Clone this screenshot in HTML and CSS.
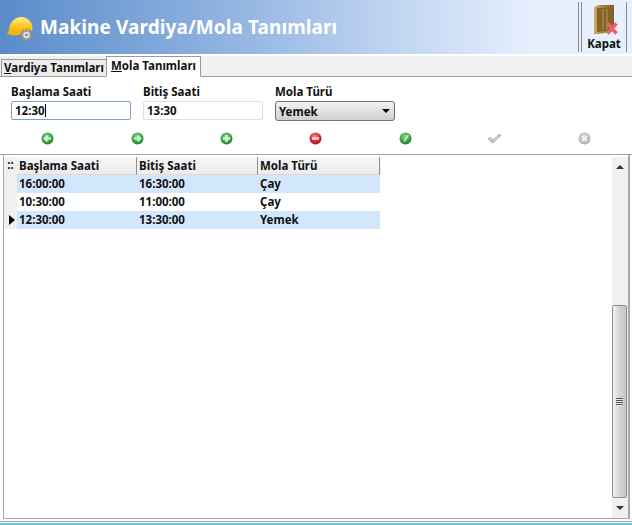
FILE: index.html
```html
<!DOCTYPE html>
<html lang="tr">
<head>
<meta charset="utf-8">
<title>Makine Vardiya/Mola Tanımları</title>
<link rel="stylesheet" href="styles.css">
</head>
<body>
<svg width="0" height="0" class="defs">
  <defs>
    <radialGradient id="gr" cx="45%" cy="35%" r="70%"><stop offset="0" stop-color="#8fd98f"/><stop offset="0.55" stop-color="#41a845"/><stop offset="1" stop-color="#167a22"/></radialGradient>
    <radialGradient id="rd" cx="45%" cy="35%" r="70%"><stop offset="0" stop-color="#f28b8b"/><stop offset="0.55" stop-color="#d8303a"/><stop offset="1" stop-color="#a01018"/></radialGradient>
    <radialGradient id="gy" cx="45%" cy="35%" r="70%"><stop offset="0" stop-color="#dcdcdc"/><stop offset="1" stop-color="#a6a6a6"/></radialGradient>
    <linearGradient id="door" x1="0" x2="1" y1="0" y2="0"><stop offset="0" stop-color="#cfae6c"/><stop offset="0.5" stop-color="#a07c3a"/><stop offset="1" stop-color="#7d5c26"/></linearGradient>
    <linearGradient id="hat" x1="0" x2="0" y1="0" y2="1"><stop offset="0" stop-color="#ffe98c"/><stop offset="0.6" stop-color="#fcc419"/><stop offset="1" stop-color="#f2ae08"/></linearGradient>
  </defs>
</svg>
<div class="app">
  <header class="banner">
    <svg class="logo" width="27" height="26" viewBox="0 0 27 26">
      <path d="M2 13 C3 6 8 1 14 1 C20 1 25 5 25.500 12 L25 15 L14 18 L2 17Z" fill="url(#hat)"/>
      <path d="M0.500 15.500 C5 13.500 10 14 15 15 L14 18.500 C9 20 3 19.500 0.500 17.500Z" fill="#f5b30c"/>
      <circle cx="19.500" cy="19" r="5" fill="#9b9ea2"/>
      <circle cx="19.500" cy="19" r="5.700" fill="none" stroke="#8a8d91" stroke-width="1.600" stroke-dasharray="2 1.600"/>
      <circle cx="19.500" cy="19" r="3.200" fill="#dfe1e3"/>
      <circle cx="19.500" cy="19" r="1.200" fill="#74787c"/>
    </svg>
    <h1 class="title">Makine Vardiya/Mola Tanımları</h1>
    <div class="close-box">
      <svg class="door-icon" width="25" height="30" viewBox="0 0 25 30">
        <path d="M1 2 L6 0 H21 V26 L6 29 H1Z" fill="url(#door)"/>
        <path d="M4 3 H19 V25 L4 27Z" fill="#85622a"/>
        <path d="M10 4 V25 M14 4 V25" stroke="#a88545" stroke-width="1.500"/>
        <path d="M14.500 18.500 L23.500 28.500 M23.500 18.500 L14.500 28.500" stroke="#e8606a" stroke-width="3.400"/>
      </svg>
      <span class="close-label">Kapat</span>
    </div>
  </header>
  <nav class="tabs">
    <div class="tab"><u>V</u>ardiya Tanımları</div>
    <div class="tab tab-active"><u>M</u>ola Tanımları</div>
  </nav>
  <section class="form">
    <div class="field">
      <label class="label">Başlama Saati</label>
      <div class="input input-focus">12:30<span class="caret"></span></div>
    </div>
    <div class="field">
      <label class="label">Bitiş Saati</label>
      <div class="input">13:30</div>
    </div>
    <div class="field">
      <label class="label">Mola Türü</label>
      <div class="select">Yemek<span class="arrow"></span></div>
    </div>
  </section>
  <section class="toolbar">
    <svg width="13" height="13" viewBox="0 0 13 13"><circle cx="6.500" cy="6.500" r="6" fill="url(#gr)"/><path d="M10 6.500H4M6.500 3.800 3.800 6.500 6.500 9.200" fill="none" stroke="#d8f2d8" stroke-width="2"/></svg>
    <svg width="13" height="13" viewBox="0 0 13 13"><circle cx="6.500" cy="6.500" r="6" fill="url(#gr)"/><path d="M3 6.500H9M6.500 3.800 9.200 6.500 6.500 9.200" fill="none" stroke="#d8f2d8" stroke-width="2"/></svg>
    <svg width="13" height="13" viewBox="0 0 13 13"><circle cx="6.500" cy="6.500" r="6" fill="url(#gr)"/><path d="M6.500 3V10M3 6.500H10" fill="none" stroke="#d8f2d8" stroke-width="2.400"/></svg>
    <svg width="13" height="13" viewBox="0 0 13 13"><circle cx="6.500" cy="6.500" r="6" fill="url(#rd)"/><path d="M3 6.500H10" fill="none" stroke="#fbe4e4" stroke-width="2.400"/></svg>
    <svg width="13" height="13" viewBox="0 0 13 13"><circle cx="6.500" cy="6.500" r="6" fill="url(#gr)"/><path d="M8.800 2.800 5.200 8.200 4.400 10 6.200 9 9.800 3.600Z" fill="#e4f4e4"/></svg>
    <svg width="15" height="11" viewBox="0 0 15 11"><path d="M0.500 6 3 3.500 5.800 6 12.500 0.500 14.500 2.500 5.800 10.500Z" fill="url(#gy)"/></svg>
    <svg width="13" height="13" viewBox="0 0 13 13"><circle cx="6.500" cy="6.500" r="6" fill="url(#gy)"/><path d="M4 4 9 9M9 4 4 9" stroke="#f2f2f2" stroke-width="2"/></svg>
  </section>
  <section class="grid-box">
    <div class="table">
      <div class="row row-head">
        <div class="cell-ind ind-head">::</div>
        <div class="cell head">Başlama Saati</div>
        <div class="cell head">Bitiş Saati</div>
        <div class="cell head">Mola Türü</div>
      </div>
      <div class="row row-blue">
        <div class="cell-ind"></div>
        <div class="cell">16:00:00</div>
        <div class="cell">16:30:00</div>
        <div class="cell">Çay</div>
      </div>
      <div class="row">
        <div class="cell-ind"></div>
        <div class="cell">10:30:00</div>
        <div class="cell">11:00:00</div>
        <div class="cell">Çay</div>
      </div>
      <div class="row row-blue">
        <div class="cell-ind"><span class="pointer"></span></div>
        <div class="cell">12:30:00</div>
        <div class="cell">13:30:00</div>
        <div class="cell">Yemek</div>
      </div>
    </div>
    <div class="scrollbar">
      <div class="sb-btn"><span class="sb-up"></span></div>
      <div class="sb-track"></div>
      <div class="sb-thumb"><span class="grip"></span></div>
      <div class="sb-btn"><span class="sb-down"></span></div>
    </div>
  </section>
  <footer class="status"></footer>
</div>
</body>
</html>
```
FILE: styles.css
```css
* { box-sizing: border-box; }
html, body { margin: 0; padding: 0; }
body { background: #fff; font-family: "Noto Sans", "DejaVu Sans", sans-serif; font-size: 11.5px; font-weight: 700; color: #111; }
.defs { position: absolute; }
.app { width: 632px; height: 525px; display: flex; flex-direction: column; overflow: hidden; }

.banner { height: 54px; flex: none; display: flex; align-items: center; padding-left: 7px; background: linear-gradient(90deg, #5a8cca 0%, #8fb2e0 35%, #c5d8f3 65%, #e8f0fe 85%, #e8f0fe 100%); }
.logo { flex: none; margin-top: 3px; }
.title { margin: 0 0 0 6px; flex: 1; font-size: 19px; letter-spacing: 0.08px; font-weight: 700; color: #fff; line-height: 54px; white-space: nowrap; }
.close-box { width: 49px; height: 50px; margin-right: 5px; border-left: 4px double #8a8a8a; border-right: 1px solid #8a8a8a; display: flex; flex-direction: column; align-items: center; padding-top: 3px; }
.door-icon { flex: none; margin-left: 3px; }
.close-label { font-size: 11.5px; line-height: 16px; margin-top: 1px; color: #111; }

.tabs { height: 23px; flex: none; background: linear-gradient(#fff 0 2px, #f0f0f0 2px); border-bottom: 1px solid #9a9a9a; display: flex; align-items: flex-end; padding-left: 1px; }
.tab { height: 18px; width: 105px; margin-bottom: -1px; border: 1px solid #9a9a9a; border-right: 0; background: #ececec; line-height: 16px; text-align: center; white-space: nowrap; }
.tab-active { height: 21px; width: 95px; background: #fff; border-right: 1px solid #9a9a9a; border-bottom: 1px solid #fff; line-height: 17px; }

.form { flex: none; height: 45px; display: flex; gap: 12px; padding-left: 11px; padding-top: 7px; }
.field { width: 120px; display: flex; flex-direction: column; }
.label { line-height: 15px; height: 17px; }
.input { height: 19px; border: 1px solid #dcdfe4; border-radius: 2px; padding-left: 3px; line-height: 18px; background: #fff; }
.input-focus { border-color: #7da2ce; }
.caret { display: inline-block; width: 1px; height: 13px; background: #000; vertical-align: -2px; }
.select { height: 20px; border: 1px solid #6f6f6f; border-radius: 3px; padding-left: 3px; line-height: 19px; background: linear-gradient(#f2f2f2, #cfcfcf); display: flex; justify-content: space-between; align-items: center; padding-right: 4px; }
.arrow { width: 0; height: 0; border: 4px solid transparent; border-top-color: #000; border-bottom: 0; }

.toolbar { flex: none; height: 33px; padding: 0 3px; display: grid; grid-template-columns: repeat(7, 1fr); justify-items: center; align-items: center; border-bottom: 1px solid #a0a0a0; }

.grid-box { flex: none; height: 364px; margin: 0 2px 0 3px; border: 2px solid #a8a8a8; border-width: 0 2px 1px 1px; padding: 2px 0 0 0; display: flex; justify-content: space-between; }
.table { width: 377px; display: flex; flex-direction: column; }
.row { height: 18px; display: grid; grid-template-columns: 13px 120px 121px 122px; line-height: 18px; }
.row-head { background: #f0f0f0; }
.row-blue .cell { background: #d3e7fc; }
.cell { padding-left: 2px; white-space: nowrap; }
.head { border-right: 1px solid #8f8f8f; border-bottom: 1px solid #dadada; background: linear-gradient(#f7f7f7, #ebebeb); line-height: 17px; }
.cell-ind { background: #f0f0f0; display: flex; align-items: center; justify-content: center; }
.ind-head { line-height: 14px; padding-bottom: 3px; }
.pointer { width: 0; height: 0; border: 5px solid transparent; border-left: 6px solid #000; border-right: 0; margin-left: 2px; }

.scrollbar { width: 16px; display: flex; flex-direction: column; background: #f0f0f0; }
.sb-btn { height: 20px; flex: none; display: flex; align-items: center; justify-content: center; }
.sb-up { width: 0; height: 0; border: 4px solid transparent; border-bottom: 4px solid #333; border-top: 0; }
.sb-down { width: 0; height: 0; border: 4px solid transparent; border-top: 4px solid #333; border-bottom: 0; }
.sb-track { flex: none; height: 128px; }
.sb-thumb { flex: 1; margin-right: 1px; border: 1px solid #8e8e8e; border-radius: 2px; background: linear-gradient(90deg, #f2f2f2, #d2d2d2 50%, #c8c8c8); display: flex; align-items: center; justify-content: center; }
.grip { width: 7px; height: 8px; background: repeating-linear-gradient(#555 0 1px, #e4e4e4 1px 2px); }

.status { flex: none; height: 5px; margin-top: 2px; border-top: 1px solid #a4a4a8; background: linear-gradient(#fff 0 1px, #64c7dc 1px); }
```
